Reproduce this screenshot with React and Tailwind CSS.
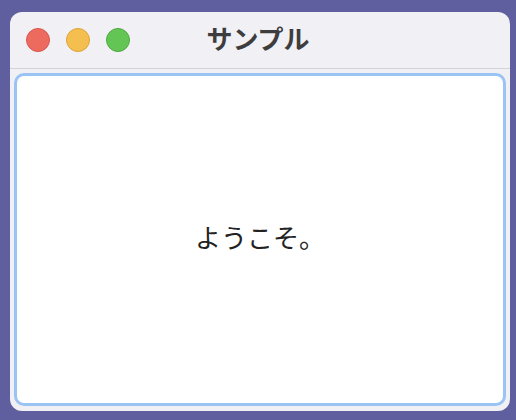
export default function App() {
  return (
    <div
      className="h-[420px] w-[516px] bg-[#5f5e9e] pt-[12px] pl-[10px]"
      style={{ fontFamily: '"Noto Sans CJK JP", "Noto Sans", sans-serif' }}
    >
      <div className="flex h-[399px] w-[500px] flex-col overflow-hidden rounded-[12px] bg-[#f1f0f5]">
        <div className="relative flex h-[57px] shrink-0 items-center border-b border-[#d3d3d6]">
          <div className="flex items-center gap-[16px] pl-[16px]">
            <span className="h-[24px] w-[24px] rounded-full border border-[#d9574f] bg-[#ed6a5e]" />
            <span className="h-[24px] w-[24px] rounded-full border border-[#dca43a] bg-[#f5bf4f]" />
            <span className="h-[24px] w-[24px] rounded-full border border-[#52a842] bg-[#62c554]" />
          </div>
          <div className="absolute inset-0 flex items-center justify-center pr-[4px] pb-[6px] text-[26px] font-semibold text-[#3d3d40]">
            サンプル
          </div>
        </div>
        <div className="flex flex-1 p-[4px] pb-[5px]">
          <div className="flex flex-1 items-center justify-center rounded-[10px] border-[3px] border-[#9ac4f3] bg-white pb-[6px] text-[26px] text-[#222]">
            ようこそ。
          </div>
        </div>
      </div>
    </div>
  );
}
